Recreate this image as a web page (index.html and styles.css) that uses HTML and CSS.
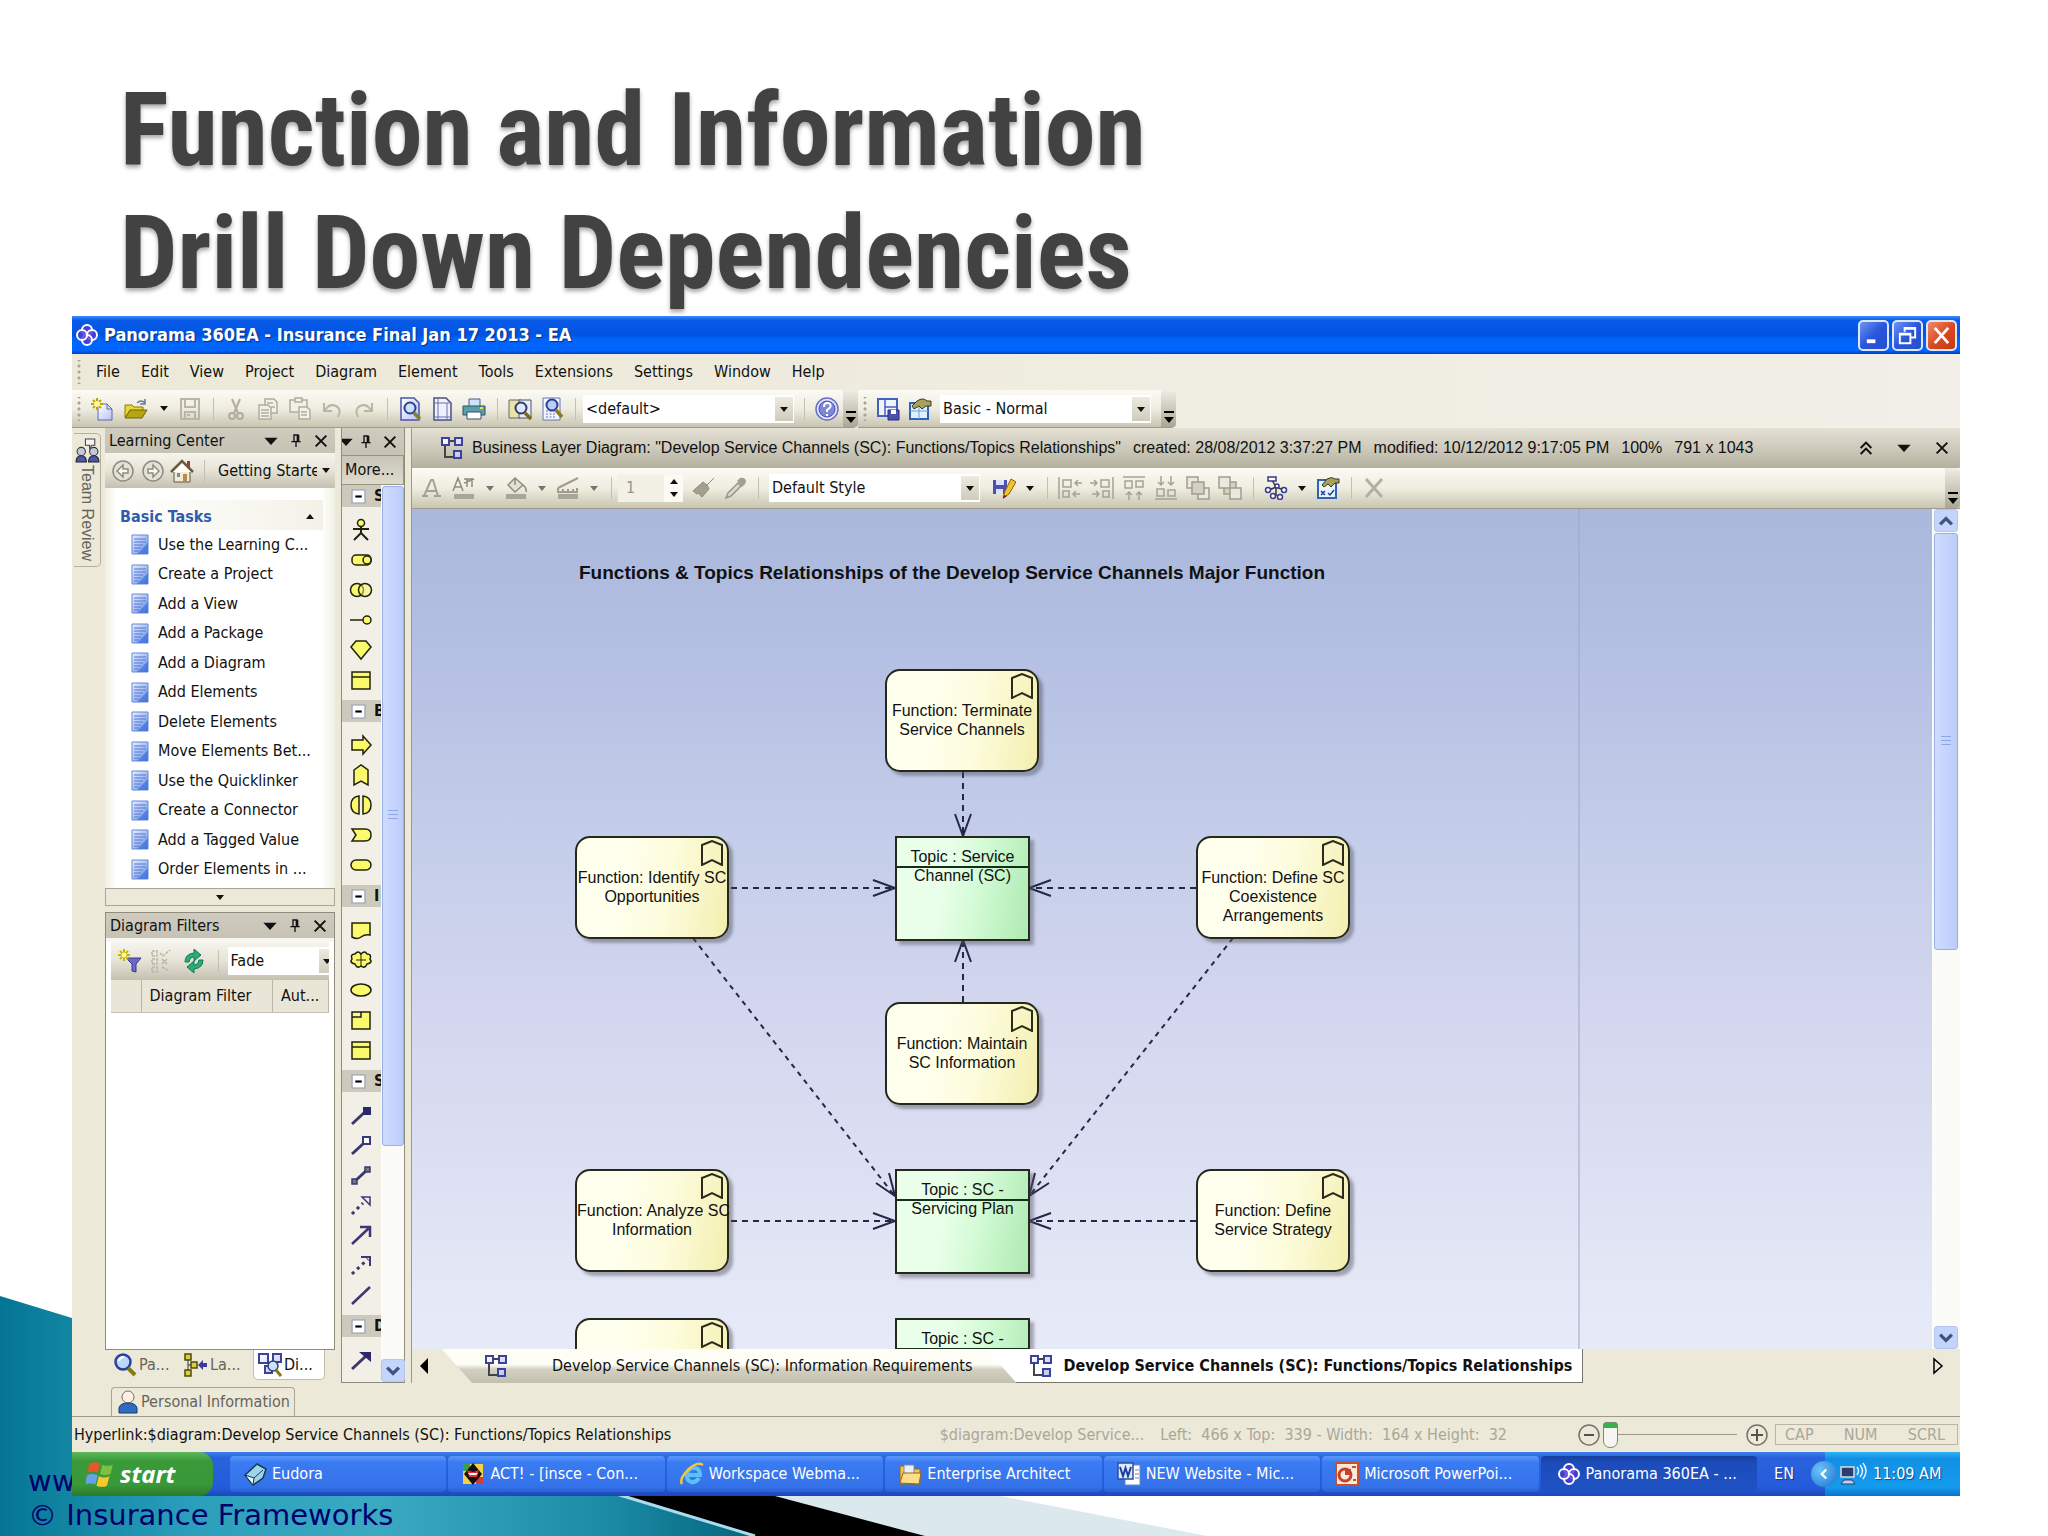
FILE: index.html
```html
<!DOCTYPE html>
<html lang="en">
<head>
<meta charset="utf-8">
<title>Function and Information Drill Down Dependencies</title>
<link rel="stylesheet" href="styles.css">
</head>
<body>
<svg class="defs" width="0" height="0" aria-hidden="true">
  <defs>
    <linearGradient id="paper" x1="0" y1="0" x2="1" y2="1"><stop offset="0" stop-color="#fff"/><stop offset="1" stop-color="#b9c2f4"/></linearGradient>
    <linearGradient id="teal" x1="0" y1="0" x2="1" y2="0"><stop offset="0" stop-color="#047694"/><stop offset=".25" stop-color="#2a9fbb"/><stop offset=".5" stop-color="#3ba9c2"/><stop offset=".8" stop-color="#1c8ca6"/><stop offset="1" stop-color="#04657d"/></linearGradient>
    <linearGradient id="doc" x1="0" y1="0" x2="1" y2="1"><stop offset="0" stop-color="#e8efff"/><stop offset=".5" stop-color="#a9c2f5"/><stop offset="1" stop-color="#4d7de0"/></linearGradient>
  </defs>
  <symbol id="i-logo" viewBox="0 0 24 24"><g fill="#5038d8" fill-opacity=".8" stroke="#fff" stroke-width="2"><circle cx="12" cy="7" r="5"/><circle cx="17" cy="12" r="5"/><circle cx="12" cy="17" r="5"/><circle cx="7" cy="12" r="5"/></g></symbol>
  <symbol id="i-new" viewBox="0 0 24 24"><path d="M8 7h9l5 5v11H8z" fill="url(#paper)" stroke="#5b66b8"/><path d="M17 7v5h5" fill="none" stroke="#5b66b8"/><path d="M7 1v12M1 7h12M3 3l8 8M11 3l-8 8" stroke="#b9a600" stroke-width="2"/><circle cx="7" cy="7" r="3" fill="#fff8a0"/></symbol>
  <symbol id="i-open" viewBox="0 0 24 24"><path d="M1 20V8h7l2 2h9v4" fill="#e8d53a" stroke="#8a7a00"/><path d="M1 21l5-8h17l-5 8z" fill="#b7a411" stroke="#6f6200"/><path d="M13 6q4-4 8 0M21 2v5h-5" fill="none" stroke="#6a78a0" stroke-width="1.5"/></symbol>
  <symbol id="i-save" viewBox="0 0 24 24"><g fill="none" stroke="#b9b6a6" stroke-width="2"><path d="M3 2h18v20H3z"/><path d="M7 2v8h10V2M7 22v-7h10v7M9 18h3"/></g></symbol>
  <symbol id="i-cut" viewBox="0 0 24 24"><g fill="none" stroke="#b0ad9e" stroke-width="2"><path d="M8 2l6 14M16 2l-6 14"/><circle cx="8" cy="19" r="3"/><circle cx="16" cy="19" r="3"/></g></symbol>
  <symbol id="i-copy" viewBox="0 0 24 24"><g fill="#f2f1e8" stroke="#b0ad9e" stroke-width="1.5"><path d="M9 2h9l3 3v11H9z"/><path d="M3 8h9l3 3v11H3z"/><path d="M5 13h8M5 16h8M5 19h8M11 6h6M15 10h4"/></g></symbol>
  <symbol id="i-paste" viewBox="0 0 24 24"><g fill="#f2f1e8" stroke="#b0ad9e" stroke-width="1.5"><path d="M2 3h17v12H2z"/><path d="M7 1h7v4H7z"/><path d="M11 10h8l3 3v9H11zM13 15h6M13 18h6"/></g></symbol>
  <symbol id="i-undo" viewBox="0 0 24 24"><path d="M4 6v8h8M5 13q5-7 11-4t2 11" fill="none" stroke="#b9b6a6" stroke-width="2"/></symbol>
  <symbol id="i-redo" viewBox="0 0 24 24"><path d="M20 6v8h-8M19 13q-5-7-11-4t-2 11" fill="none" stroke="#b9b6a6" stroke-width="2"/></symbol>
  <symbol id="i-preview" viewBox="0 0 24 24"><path d="M3 1h13l5 5v17H3z" fill="url(#paper)" stroke="#4a55a8" stroke-width="1.5"/><circle cx="12" cy="11" r="5.500" fill="#cfe0ff" stroke="#2c3f91" stroke-width="2"/><path d="M16 16l6 6" stroke="#8a7d1a" stroke-width="3.500"/></symbol>
  <symbol id="i-page" viewBox="0 0 24 24"><path d="M4 1h12l5 5v17H4z" fill="#eef1ff" stroke="#4a4f80" stroke-width="1.500"/><path d="M8 1v22M17 6v17M4 6h17M4 20h17" stroke="#6a70a8"/></symbol>
  <symbol id="i-print" viewBox="0 0 24 24"><path d="M7 2h11v8H7z" fill="#cfe3ff" stroke="#4a5a8a"/><path d="M1 9h22v9H1z" fill="#5aa0a8" stroke="#2b5560"/><path d="M5 15h14v7H5z" fill="#fff" stroke="#3a4a6a"/><path d="M18 11h3" stroke="#e8e04a" stroke-width="2"/></symbol>
  <symbol id="i-find" viewBox="0 0 24 24"><path d="M1 3h12v18H1z" fill="#e9e3a5" stroke="#666"/><path d="M11 3h12v18H11z" fill="#e8ecff" stroke="#555"/><circle cx="13" cy="11" r="5.500" fill="#dfe6ff" stroke="#333a66" stroke-width="2"/><path d="M17 16l6 6" stroke="#7a6d1a" stroke-width="3.500"/></symbol>
  <symbol id="i-find2" viewBox="0 0 24 24"><path d="M3 1h17v22H3z" fill="#f2f4ff" stroke="#6672b8"/><path d="M6 14h9M6 17h9M6 20h9" stroke="#6672b8" stroke-dasharray="2 1.500"/><circle cx="12" cy="8" r="5.500" fill="#b9cdfb" stroke="#2c3f91" stroke-width="2"/><path d="M16 13l6 7" stroke="#8a7d1a" stroke-width="3.500"/></symbol>
  <symbol id="i-help" viewBox="0 0 24 24"><circle cx="12" cy="12" r="11" fill="#e4e6ff" stroke="#6a6fc8" stroke-width="1.500"/><circle cx="12" cy="12" r="8" fill="#7f87d8" stroke="#4c50a8"/><path d="M9 10q0-4 3.500-4t3 3.500q-.5 1.500-3.500 3.500v2M12 17v2" fill="none" stroke="#fff" stroke-width="2"/></symbol>
  <symbol id="i-layout" viewBox="0 0 24 24"><path d="M2 2h19v17H2z" fill="#eef3ff" stroke="#4660c0" stroke-width="2"/><path d="M9 2v17M9 10h12" stroke="#4660c0" stroke-width="1.500"/><path d="M12 13h11v10H12z" fill="#4c50b0" stroke="#2a2d78"/><path d="M15 13h5v4h-5z" fill="#fff"/></symbol>
  <symbol id="i-layout2" viewBox="0 0 24 24"><path d="M2 6h18v16H2z" fill="#dff0ff" stroke="#2f62b8" stroke-width="2"/><path d="M2 14h18M11 6v16" stroke="#69a3e0"/><path d="M4 9l5-5q6-4 10 0h4v5h-5l-4 3-3-3-5 3z" fill="#a9a05a" stroke="#3c3a1a"/></symbol>
  <symbol id="i-diagram" viewBox="0 0 24 24"><g fill="url(#paper)" stroke="#3b429c" stroke-width="2"><path d="M5 9v12h9M9 5h6" fill="none" stroke="#444"/><path d="M2 2h7v7H2zM15 2h7v7h-7zM14 15h7v7h-7z"/></g></symbol>
  <symbol id="i-team" viewBox="0 0 24 24"><path d="M10 1h9v6h-3l-2 3v-3h-4z" fill="#f3f3f3" stroke="#444"/><circle cx="6" cy="13" r="4" fill="#c3c8d8" stroke="#333"/><circle cx="18" cy="13" r="4" fill="#c3c8d8" stroke="#333"/><path d="M1 23q0-6 5-6t5 6zM13 23q0-6 5-6t5 6z" fill="#4a5aa8" stroke="#222"/></symbol>
  <symbol id="i-pin" viewBox="0 0 24 24"><path d="M8 3h8M9 3v10M14 3v10M16 3v10M5 13h14M12 13v8" fill="none" stroke="#111" stroke-width="2"/></symbol>
  <symbol id="i-x" viewBox="0 0 24 24"><path d="M4 4l16 16M20 4L4 20" stroke="currentColor" stroke-width="3"/></symbol>
  <symbol id="i-down" viewBox="0 0 24 24"><path d="M2 7h20L12 18z" fill="currentColor"/></symbol>
  <symbol id="i-chev" viewBox="0 0 24 24"><path d="M4 12l8-8 8 8M4 21l8-8 8 8" fill="none" stroke="#111" stroke-width="3"/></symbol>
  <symbol id="i-over" viewBox="0 0 12 24"><path d="M1 9h10" stroke="#000" stroke-width="2"/><path d="M1 14h10l-5 6z"/></symbol>
  <symbol id="i-back" viewBox="0 0 24 24"><circle cx="12" cy="12" r="10" fill="#e4e2d8" stroke="#8f8c7e" stroke-width="1.500"/><path d="M6 12l6-6v4h5v4h-5v4z" fill="#f8f7f0" stroke="#8f8c7e" stroke-width="1.500"/></symbol>
  <symbol id="i-fwd" viewBox="0 0 24 24"><circle cx="12" cy="12" r="10" fill="#e4e2d8" stroke="#8f8c7e" stroke-width="1.500"/><path d="M18 12l-6-6v4H7v4h5v4z" fill="#f8f7f0" stroke="#8f8c7e" stroke-width="1.500"/></symbol>
  <symbol id="i-home" viewBox="0 0 24 24"><path d="M4 12v11h16V12" fill="#f4ead0" stroke="#555"/><path d="M17 2h3v6h-3z" fill="#a33"/><path d="M1 13L12 2l11 11" fill="#fff" stroke="#6d5a36" stroke-width="2.500"/><path d="M13 15h4v8h-4z" fill="#b98a4a"/><path d="M7 14h3v4H7z" fill="#6a8ac8"/></symbol>
  <symbol id="i-doc" viewBox="0 0 18 21"><path d="M1 1h16v19H1z" fill="url(#doc)" stroke="#6487d6"/><path d="M3 5h12M3 8h12M3 11h9M3 14h7M3 17h5" stroke="#5674cc"/><path d="M17 9v11H6z" fill="#3f74dc" opacity=".7"/></symbol>
  <symbol id="i-letter" viewBox="0 0 24 24"><path d="M4 20L11 4h2l5 16M7 15h9M2 20h6M14 20h7" fill="none" stroke="#a5a293" stroke-width="2"/></symbol>
  <symbol id="i-letters" viewBox="0 0 24 24"><path d="M1 15L6 2l5 13M3 11h7M12 3h10M12 7l10-4M15 3v8M20 3v8" fill="none" stroke="#8f8c7e" stroke-width="1.500"/><path d="M2 18h20v5H2z" fill="#a9a698"/></symbol>
  <symbol id="i-fill" viewBox="0 0 24 24"><path d="M4 9l7-7 8 7-8 7zM11 2v7M19 9q4 3 3 7" fill="#e3e1d5" stroke="#8f8c7e" stroke-width="1.500"/><path d="M2 18h20v5H2z" fill="#a9a698"/></symbol>
  <symbol id="i-line" viewBox="0 0 24 24"><path d="M2 12L22 2M2 12v4h19v-4M7 13v3M12 13v3M17 13v3" fill="none" stroke="#a09d8e" stroke-width="2"/><path d="M2 18h20v5H2z" fill="#a9a698"/></symbol>
  <symbol id="i-brush" viewBox="0 0 24 24"><path d="M23 2l-7 7-4-3-10 9q3 1 3 3l3-1q1 3 3 4l7-8-2-4 7-7z" fill="#a3a091" stroke="#8f8c7e"/></symbol>
  <symbol id="i-dropper" viewBox="0 0 24 24"><path d="M3 22l2-5L15 7l3 3L8 20z" fill="#dcdacd" stroke="#99968a" stroke-width="1.500"/><path d="M14 5l3-3q3-1 5 1t0 5l-3 3z" fill="#a3a091"/></symbol>
  <symbol id="i-savepen" viewBox="0 0 24 24"><path d="M1 4h14v14H1z" fill="#4c50b0"/><path d="M4 4h8v5H4zM4 13h7v5H4z" fill="#dfe2ff"/><path d="M11 22l2-7L19 3l5 3-7 12z" fill="#f0c52a" stroke="#8a5a1a"/><path d="M11 23l1-4 3 1z" fill="#7a1f10"/></symbol>
  <symbol id="i-al1" viewBox="0 0 24 24"><path d="M1 1v22M5 4h8v7H5zM5 15h6v6H5zM24 7h-7m3-3l-3 3 3 3M22 18h-7m3-3l-3 3 3 3" fill="none" stroke="#a5a293" stroke-width="1.500"/></symbol>
  <symbol id="i-al2" viewBox="0 0 24 24"><path d="M23 1v22M11 4h8v7h-8zM13 15h6v6h-6zM0 7h7M4 4l3 3-3 3M2 18h7m-3-3l3 3-3 3" fill="none" stroke="#a5a293" stroke-width="1.500"/></symbol>
  <symbol id="i-al3" viewBox="0 0 24 24"><path d="M1 1h22M3 5h7v7H3zM14 5h7v6h-7zM7 24v-8m-3 3l3-3 3 3M17 24v-8m-3 3l3-3 3 3" fill="none" stroke="#a5a293" stroke-width="1.500"/></symbol>
  <symbol id="i-al4" viewBox="0 0 24 24"><path d="M1 23h22M3 13h7v7H3zM14 14h7v6h-7zM7 0v9M4 6l3 3 3-3M17 0v9m-3-3l3 3 3-3" fill="none" stroke="#a5a293" stroke-width="1.500"/></symbol>
  <symbol id="i-zf" viewBox="0 0 24 24"><g fill="#ebe9df" stroke="#a09d8e" stroke-width="1.500"><path d="M1 1h11v11H1zM12 12h11v11H12z"/><path d="M6 6h12v12H6z" fill="#d4d1c2"/></g></symbol>
  <symbol id="i-zb" viewBox="0 0 24 24"><g fill="#ebe9df" stroke="#a09d8e" stroke-width="1.500"><path d="M6 6h12v12H6z" fill="#d4d1c2"/><path d="M1 1h11v11H1zM12 12h11v11H12z"/></g></symbol>
  <symbol id="i-tree" viewBox="0 0 24 24"><g fill="#fff" stroke="#36388a" stroke-width="1.500"><path d="M8 4l4 7M12 11l-7 3M12 11l8 3M12 12v8" fill="none" stroke="#333"/><path d="M4 1h8v4H4z"/><circle cx="13" cy="10" r="2"/><circle cx="4" cy="14" r="2.500"/><circle cx="20" cy="14" r="2.500"/><circle cx="9" cy="20" r="2.500"/><circle cx="16" cy="21" r="2.500"/></g></symbol>
  <symbol id="i-props" viewBox="0 0 24 24"><path d="M2 4h18v18H2z" fill="#eaf4ff" stroke="#2f62b8" stroke-width="2"/><path d="M5 15l4 4M9 15l-4 4M12 17l2 2 4-5" fill="none" stroke="#223a90" stroke-width="1.500"/><path d="M6 9l5-6q5-3 8 0h4v4h-4l-4 4-3-3-4 3z" fill="#a9a05a" stroke="#3c3a1a"/></symbol>
  <symbol id="i-gx" viewBox="0 0 24 24"><path d="M4 3l16 18M20 3L4 21" stroke="#b3b0a3" stroke-width="3"/></symbol>
  <symbol id="i-funnel" viewBox="0 0 24 24"><path d="M8 9h15l-5 6v8l-4-1v-7z" fill="#6c66c8" stroke="#3c3890"/><g stroke="#c9b400" stroke-width="2"><path d="M6 0v12M0 6h12M2 2l8 8M10 2l-8 8"/></g><circle cx="6" cy="6" r="2.500" fill="#fff8a0"/></symbol>
  <symbol id="i-checks" viewBox="0 0 24 24"><path d="M2 2h5v5H2zM2 10h5v5H2zM2 18h5v5H2zM10 4l3 3 7-6M12 10l5 5M17 10l-5 5M12 18l7 4" fill="none" stroke="#b9b6a6" stroke-width="1.500" stroke-dasharray="3 1"/></symbol>
  <symbol id="i-refresh" viewBox="0 0 24 24"><path d="M3 13Q3 5 12 4V0l7 6-7 6V8q-4 0-5 5zM21 11q0 8-9 9v4l-7-6 7-6v4q4 0 5-5z" fill="#2fa87a" stroke="#0d7a50"/></symbol>
  <symbol id="i-mag" viewBox="0 0 24 24"><circle cx="10" cy="9" r="7.500" fill="#b9d8ff" stroke="#2b3f9a" stroke-width="2.500"/><path d="M6 8q1-4 5-4" stroke="#fff" stroke-width="2" fill="none"/><path d="M15 15l7 7" stroke="#847a18" stroke-width="4"/></symbol>
  <symbol id="i-layers" viewBox="0 0 24 24"><path d="M4 4v16M4 12h7" stroke="#333" fill="none"/><g fill="#d8d23a" stroke="#4c4a10" stroke-width="1.500"><path d="M1 1h6v6H1zM1 17h6v6H1zM7 9h6v6H7z"/></g><path d="M14 12l5-5v3h4v4h-4v3z" fill="#3c3aa0"/></symbol>
  <symbol id="i-dfind" viewBox="0 0 24 24"><g fill="url(#paper)" stroke="#3b429c" stroke-width="2"><path d="M1 1h9v9H1zM15 1h8v8h-8zM7 13h7v7H7z"/></g><circle cx="15" cy="13" r="5" fill="#cfe0ff" stroke="#2c3f6a" stroke-width="1.500"/><path d="M18 17l5 6" stroke="#847a18" stroke-width="3"/></symbol>
  <symbol id="i-person" viewBox="0 0 24 24"><circle cx="12" cy="7" r="6" fill="#fdf1e6" stroke="#7a6a60"/><path d="M3 23V18q1-5 9-5t9 5v5z" fill="#2f6cc0" stroke="#143a70"/></symbol>
  <symbol id="i-minus" viewBox="0 0 14 14"><path d="M1 1h12v12H1z" fill="#fff" stroke="#8f9bb0"/><path d="M4 7h6" stroke="#000" stroke-width="2"/></symbol>
  <symbol id="t-actor" viewBox="0 0 24 24"><circle cx="12" cy="5" r="3.500"/><path d="M12 9v6M4 11h16M12 15l-7 7M12 15l7 7" stroke-width="2" fill="none"/></symbol>
  <symbol id="t-role" viewBox="0 0 24 24"><rect x="3" y="7" width="19" height="10" rx="4"/><circle cx="18" cy="12" r="4"/></symbol>
  <symbol id="t-collab" viewBox="0 0 24 24"><circle cx="8" cy="12" r="6.500"/><circle cx="16" cy="12" r="6.500" fill-opacity=".5"/></symbol>
  <symbol id="t-iface" viewBox="0 0 24 24"><path d="M1 12h13"/><circle cx="18" cy="12" r="4"/></symbol>
  <symbol id="t-gem" viewBox="0 0 24 24"><path d="M7 3h10l5 6-10 12L2 9z"/></symbol>
  <symbol id="t-obj" viewBox="0 0 24 24"><path d="M3 4h18v17H3zM3 9h18"/></symbol>
  <symbol id="t-proc" viewBox="0 0 24 24"><path d="M3 7h11V3l8 9-8 9v-4H3z"/></symbol>
  <symbol id="t-func" viewBox="0 0 24 24"><path d="M5 7l7-5 7 5v15l-7-4-7 4z"/></symbol>
  <symbol id="t-inter" viewBox="0 0 24 24"><path d="M10 3v18Q2 20 2 12t8-9zM14 3v18q8-1 8-9t-8-9z"/></symbol>
  <symbol id="t-event" viewBox="0 0 24 24"><path d="M3 6h13q6 0 6 6t-6 6H3l4-6z"/></symbol>
  <symbol id="t-serv" viewBox="0 0 24 24"><rect x="2" y="7" width="20" height="10" rx="5"/></symbol>
  <symbol id="t-repr" viewBox="0 0 24 24"><path d="M3 5h18v12q-5-1-9 2t-9 0z"/></symbol>
  <symbol id="t-mean" viewBox="0 0 24 24"><path d="M6 6q3-4 6 0 4-4 6 0 5 0 3 5 3 4-3 5-2 5-6 2-4 3-6-2-6-1-3-5-2-5 3-5z"/><path d="M12 6v12M7 12h10" stroke-width="1"/></symbol>
  <symbol id="t-value" viewBox="0 0 24 24"><ellipse cx="12" cy="12" rx="10" ry="6"/></symbol>
  <symbol id="t-prod" viewBox="0 0 24 24"><path d="M3 4h18v17H3zM3 9h9V4"/></symbol>
  <symbol id="r-comp" viewBox="0 0 24 24"><path d="M3 21L17 8" stroke="#3a3868" stroke-width="3"/><path d="M14 4h8v8h-8z" fill="#2a2868"/></symbol>
  <symbol id="r-aggr" viewBox="0 0 24 24"><path d="M3 21L15 10" stroke="#3a3868" stroke-width="3"/><path d="M14 4h7v7h-7z" fill="#fff" stroke="#3a3878" stroke-width="2"/></symbol>
  <symbol id="r-assign" viewBox="0 0 24 24"><path d="M5 19L18 7" stroke="#3a3868" stroke-width="3"/><path d="M3 16h5v5H3zM16 4h5v5h-5z" fill="#777" stroke="#3a3878" stroke-width="1.500"/></symbol>
  <symbol id="r-real" viewBox="0 0 24 24"><path d="M3 21L14 10" stroke="#3a3868" stroke-width="3" stroke-dasharray="3 4"/><path d="M13 4h8v8z" fill="#eee" stroke="#3a3878" stroke-width="1.500"/></symbol>
  <symbol id="r-used" viewBox="0 0 24 24"><path d="M3 21L20 5M11 4h10v10" fill="none" stroke="#3a3878" stroke-width="2.500"/></symbol>
  <symbol id="r-acc" viewBox="0 0 24 24"><path d="M3 21L19 6" stroke="#3a3868" stroke-width="3" stroke-dasharray="3 4"/><path d="M12 4h9v9" fill="none" stroke="#3a3878" stroke-width="2"/></symbol>
  <symbol id="r-assoc" viewBox="0 0 24 24"><path d="M3 21L21 4" stroke="#3a3878" stroke-width="2.500"/></symbol>
  <symbol id="r-trig" viewBox="0 0 24 24"><path d="M3 21L17 8" stroke="#3a3868" stroke-width="3"/><path d="M10 4h12v10z" fill="#2a2868"/></symbol>
  <symbol id="badge" viewBox="0 0 22 26"><path d="M1 5l10-4 10 4v20l-10-5-10 5z" fill="none" stroke="#2b2b1c" stroke-width="2"/></symbol>
  <symbol id="i-win" viewBox="0 0 24 24"><path d="M3 3q5-2 9 0l-2 8q-4-2-9 0z" fill="#e8562a"/><path d="M14 4q4 2 9 0l-2 8q-5 2-9 0z" fill="#7cc142"/><path d="M1 13q4-2 9 0l-2 8q-4-2-9 0z" fill="#6aa0f0"/><path d="M11 14q5 2 9 0l-2 8q-4 2-9 0z" fill="#f6c92c"/></symbol>
  <symbol id="i-eudora" viewBox="0 0 24 24"><path d="M2 13L14 2l9 5-3 9-10 7z" fill="#9fd3ea" stroke="#123a56" stroke-width="1.500"/><path d="M2 13l9 3-1 7zM11 16l9-8" fill="#e6f6fc" stroke="#123a56"/></symbol>
  <symbol id="i-act" viewBox="0 0 24 24"><path d="M2 2h20v20H2z" fill="#f2d24a"/><path d="M2 2h7v7H2z" fill="#3aa04a"/><path d="M15 15h7v7h-7z" fill="#d83a3a"/><path d="M12 1l9 11-9 11-9-11z" fill="#111"/><path d="M6 8l6 2 6-2-2 7H8z" fill="#e03030"/><path d="M7 11h10l-2 2H9z" fill="#fff"/></symbol>
  <symbol id="i-ie" viewBox="0 0 24 24"><path d="M19 16q-3 5-8 4-5-2-4-8t7-6 6 7H8" fill="none" stroke="#5ec1f5" stroke-width="4"/><path d="M2 22Q-1 17 8 8T23 3" fill="none" stroke="#f0c83a" stroke-width="2.500"/></symbol>
  <symbol id="i-folder" viewBox="0 0 24 24"><path d="M2 4h8l2 3h10v15H2z" fill="#f3c552" stroke="#94651a"/><path d="M6 3h10v13H6z" fill="#e8f0ff" stroke="#889"/><path d="M2 21l3-10h18l-2 11z" fill="#fbdf86" stroke="#94651a"/></symbol>
  <symbol id="i-word" viewBox="0 0 24 24"><path d="M8 3h15v20H8z" fill="#fff" stroke="#6a86c0"/><path d="M18 8h4M18 12h4M18 16h4" stroke="#6a86c0"/><path d="M1 1h15v16H1z" fill="#dfe8fb" stroke="#2a4fa0" stroke-width="1.500"/><path d="M3 5l3 9 2.500-8L11 14l3-9" fill="none" stroke="#1b3f98" stroke-width="2"/></symbol>
  <symbol id="i-ppt" viewBox="0 0 24 24"><path d="M1 1h22v22H1z" fill="#fbe9dc" stroke="#c7502a" stroke-width="2"/><circle cx="10" cy="13" r="6" fill="none" stroke="#c7402a" stroke-width="3"/><path d="M10 13V7h6v6z" fill="#c7402a"/><path d="M17 5h4M18 18h3" stroke="#c7502a" stroke-width="2"/></symbol>
  <symbol id="i-net" viewBox="0 0 28 24"><path d="M2 5h13v10H2z" fill="#2b3f6a" stroke="#d5dcec" stroke-width="1.500"/><path d="M5 18h8l3 4H2z" fill="#c5cfe8" stroke="#2b3f6a"/><path d="M18 5q3 4 0 8M21 3q5 6 0 12M24 1q6 8 0 16" fill="none" stroke="#e4efff" stroke-width="1.500"/></symbol>
</svg>

<header class="slide-title">
  <h1>Function and Information<br>Drill Down Dependencies</h1>
</header>

<svg class="swoosh" viewBox="0 0 1240 240" aria-hidden="true">
  <path d="M560 180L1207 240H920z" fill="#dbe8ee"/>
  <path d="M600 130L1000 200l207 40H560z" fill="#dbe8ee"/>
  <path d="M560 140L775 200l150 40H560z" fill="#000"/>
  <path d="M0 0L72 22 623 200l132 40H0z" fill="url(#teal)"/>
  <path d="M560 180L623 200l132 40" fill="none" stroke="#a9dcec" stroke-width="3"/>
</svg>
<footer class="slide-foot">www<br>© Insurance Frameworks</footer>

<main class="window">
  <div class="titlebar">
    <svg class="ic"><use href="#i-logo"/></svg>
    <h2>Panorama 360EA - Insurance Final Jan 17 2013 - EA</h2>
    <button class="wb" aria-label="Minimize"><svg viewBox="0 0 24 24"><path d="M5 16h9v4H5z" fill="#fff"/></svg></button>
    <button class="wb" aria-label="Restore"><svg viewBox="0 0 24 24"><path d="M9 8V4h11v10h-4M9 5h11M4 10h11v10H4zM4 11h11" fill="none" stroke="#fff" stroke-width="2"/></svg></button>
    <button class="wb close" aria-label="Close"><svg viewBox="0 0 24 24"><path d="M5 4l14 16M19 4L5 20" stroke="#fff" stroke-width="3"/></svg></button>
  </div>

  <nav class="menubar">
    <span class="grip"></span>
    <button>File</button><button>Edit</button><button>View</button><button>Project</button><button>Diagram</button><button>Element</button><button>Tools</button><button>Extensions</button><button>Settings</button><button>Window</button><button>Help</button>
  </nav>

  <div class="toolrow">
    <div class="toolbar">
      <span class="grip"></span>
      <button class="tool" aria-label="New"><svg><use href="#i-new"/></svg></button>
      <button class="tool wide" aria-label="Open"><svg><use href="#i-open"/></svg></button>
      <button class="caret" aria-label="Open recent"></button>
      <button class="tool" aria-label="Save"><svg><use href="#i-save"/></svg></button>
      <span class="sep"></span>
      <button class="tool" aria-label="Cut"><svg><use href="#i-cut"/></svg></button>
      <button class="tool" aria-label="Copy"><svg><use href="#i-copy"/></svg></button>
      <button class="tool" aria-label="Paste"><svg><use href="#i-paste"/></svg></button>
      <button class="tool" aria-label="Undo"><svg><use href="#i-undo"/></svg></button>
      <button class="tool" aria-label="Redo"><svg><use href="#i-redo"/></svg></button>
      <span class="sep"></span>
      <button class="tool" aria-label="Print preview"><svg><use href="#i-preview"/></svg></button>
      <button class="tool" aria-label="Page setup"><svg><use href="#i-page"/></svg></button>
      <button class="tool" aria-label="Print"><svg><use href="#i-print"/></svg></button>
      <span class="sep"></span>
      <button class="tool" aria-label="Search model"><svg><use href="#i-find"/></svg></button>
      <button class="tool" aria-label="Search diagram"><svg><use href="#i-find2"/></svg></button>
      <span class="sep"></span>
      <span class="combo first"><select aria-label="View"><option>&lt;default&gt;</option></select></span>
      <span class="sep"></span>
      <button class="tool" aria-label="Help"><svg><use href="#i-help"/></svg></button>
      <button class="over" aria-label="More buttons"><svg><use href="#i-over"/></svg></button>
    </div>
    <div class="toolbar">
      <span class="grip"></span>
      <button class="tool" aria-label="Save layout"><svg><use href="#i-layout"/></svg></button>
      <button class="tool" aria-label="Edit layout"><svg><use href="#i-layout2"/></svg></button>
      <span class="combo"><select aria-label="Workspace"><option>Basic - Normal</option></select></span>
      <button class="over last" aria-label="More buttons"><svg><use href="#i-over"/></svg></button>
    </div>
  </div>

  <div class="work">
    <div class="rail">
      <button class="railtab"><svg><use href="#i-team"/></svg><span>Team Review</span></button>
    </div>

    <aside class="side">
      <section class="panel learn">
        <div class="phead"><h3>Learning Center</h3><button aria-label="Menu"><svg><use href="#i-down"/></svg></button><button aria-label="Pin"><svg><use href="#i-pin"/></svg></button><button aria-label="Close"><svg><use href="#i-x"/></svg></button></div>
        <div class="pbar">
          <button class="tool" aria-label="Back"><svg><use href="#i-back"/></svg></button><button class="tool" aria-label="Forward"><svg><use href="#i-fwd"/></svg></button><button class="tool" aria-label="Home"><svg><use href="#i-home"/></svg></button>
          <span class="sep"></span>
          <button class="topic"><span>Getting Started</span><i class="tri"></i></button>
        </div>
        <div class="tasks">
          <h4>Basic Tasks <i class="tri up"></i></h4>
          <ul>
            <li><a href="#"><svg><use href="#i-doc"/></svg>Use the Learning C...</a></li>
            <li><a href="#"><svg><use href="#i-doc"/></svg>Create a Project</a></li>
            <li><a href="#"><svg><use href="#i-doc"/></svg>Add a View</a></li>
            <li><a href="#"><svg><use href="#i-doc"/></svg>Add a Package</a></li>
            <li><a href="#"><svg><use href="#i-doc"/></svg>Add a Diagram</a></li>
            <li><a href="#"><svg><use href="#i-doc"/></svg>Add Elements</a></li>
            <li><a href="#"><svg><use href="#i-doc"/></svg>Delete Elements</a></li>
            <li><a href="#"><svg><use href="#i-doc"/></svg>Move Elements Bet...</a></li>
            <li><a href="#"><svg><use href="#i-doc"/></svg>Use the Quicklinker</a></li>
            <li><a href="#"><svg><use href="#i-doc"/></svg>Create a Connector</a></li>
            <li><a href="#"><svg><use href="#i-doc"/></svg>Add a Tagged Value</a></li>
            <li><a href="#"><svg><use href="#i-doc"/></svg>Order Elements in ...</a></li>
          </ul>
        </div>
        <button class="more" aria-label="Scroll down"><i class="tri"></i></button>
      </section>
      <section class="panel filters">
        <div class="phead"><h3>Diagram Filters</h3><button aria-label="Menu"><svg><use href="#i-down"/></svg></button><button aria-label="Pin"><svg><use href="#i-pin"/></svg></button><button aria-label="Close"><svg><use href="#i-x"/></svg></button></div>
        <div class="fbody">
          <div class="pbar">
            <button class="tool" aria-label="New filter"><svg><use href="#i-funnel"/></svg></button><button class="tool" aria-label="Edit filter"><svg><use href="#i-checks"/></svg></button><button class="tool" aria-label="Refresh"><svg><use href="#i-refresh"/></svg></button>
            <span class="sep"></span>
            <span class="combo slim"><select aria-label="Effect"><option>Fade</option></select></span>
          </div>
          <table><thead><tr><th class="c0"></th><th>Diagram Filter</th><th class="c2">Aut...</th></tr></thead></table>
        </div>
      </section>
      <div class="ptabs">
        <button><svg><use href="#i-mag"/></svg>Pa...</button><button class="mid"><svg><use href="#i-layers"/></svg>La...</button><button class="on"><svg><use href="#i-dfind"/></svg>Di...</button>
      </div>
    </aside>

    <aside class="toolbox">
      <div class="phead"><button class="cut" aria-label="Menu"><svg><use href="#i-down"/></svg></button><button aria-label="Pin"><svg><use href="#i-pin"/></svg></button><button aria-label="Close"><svg><use href="#i-x"/></svg></button></div>
      <button class="morebtn">More...</button>
      <div class="tbody">
        <div class="tlist">
          <h5><svg><use href="#i-minus"/></svg>S</h5>
          <div class="tgroup yel"><svg><use href="#t-actor"/></svg><svg><use href="#t-role"/></svg><svg><use href="#t-collab"/></svg><svg><use href="#t-iface"/></svg><svg><use href="#t-gem"/></svg><svg><use href="#t-obj"/></svg></div>
          <h5><svg><use href="#i-minus"/></svg>B</h5>
          <div class="tgroup yel"><svg><use href="#t-proc"/></svg><svg><use href="#t-func"/></svg><svg><use href="#t-inter"/></svg><svg><use href="#t-event"/></svg><svg><use href="#t-serv"/></svg></div>
          <h5><svg><use href="#i-minus"/></svg>I</h5>
          <div class="tgroup yel"><svg><use href="#t-repr"/></svg><svg><use href="#t-mean"/></svg><svg><use href="#t-value"/></svg><svg><use href="#t-prod"/></svg><svg><use href="#t-obj"/></svg></div>
          <h5><svg><use href="#i-minus"/></svg>S</h5>
          <div class="tgroup"><svg><use href="#r-comp"/></svg><svg><use href="#r-aggr"/></svg><svg><use href="#r-assign"/></svg><svg><use href="#r-real"/></svg><svg><use href="#r-used"/></svg><svg><use href="#r-acc"/></svg><svg><use href="#r-assoc"/></svg></div>
          <h5><svg><use href="#i-minus"/></svg>D</h5>
          <div class="tgroup"><svg><use href="#r-trig"/></svg></div>
        </div>
        <div class="vscroll box"><span class="thumb"></span><button class="sbtn" aria-label="Scroll down"><svg viewBox="0 0 24 24"><path d="M5 8l7 7 7-7" fill="none" stroke="#3d5585" stroke-width="4"/></svg></button></div>
      </div>
    </aside>

    <section class="doc">
      <div class="dhead">
        <svg class="ic"><use href="#i-diagram"/></svg>
        <p>Business Layer Diagram: "Develop Service Channels (SC): Functions/Topics Relationships"</p>
        <p>created: 28/08/2012 3:37:27 PM</p><p>modified: 10/12/2012 9:17:05 PM</p><p>100%</p><p>791 x 1043</p>
        <span class="dbtns"><button aria-label="Collapse"><svg><use href="#i-chev"/></svg></button><button aria-label="List"><svg><use href="#i-down"/></svg></button><button aria-label="Close"><svg><use href="#i-x"/></svg></button></span>
      </div>
      <div class="dtools">
        <button class="tool" aria-label="Font"><svg><use href="#i-letter"/></svg></button>
        <button class="tool" aria-label="Font color"><svg><use href="#i-letters"/></svg></button><button class="caret dim" aria-label="Font colors"></button>
        <button class="tool" aria-label="Fill"><svg><use href="#i-fill"/></svg></button><button class="caret dim" aria-label="Fill colors"></button>
        <button class="tool" aria-label="Line"><svg><use href="#i-line"/></svg></button><button class="caret dim" aria-label="Line colors"></button>
        <span class="sep"></span>
        <span class="spin"><input type="text" value="1" aria-label="Line width"><span><i class="tri up"></i><i class="tri"></i></span></span>
        <button class="tool" aria-label="Apply style"><svg><use href="#i-brush"/></svg></button>
        <button class="tool" aria-label="Pick style"><svg><use href="#i-dropper"/></svg></button>
        <span class="sep"></span>
        <span class="combo"><select aria-label="Style"><option>Default Style</option></select></span>
        <button class="tool after" aria-label="Save style"><svg><use href="#i-savepen"/></svg></button><button class="caret" aria-label="Save style options"></button>
        <span class="sep"></span>
        <button class="tool" aria-label="Align left"><svg><use href="#i-al1"/></svg></button>
        <button class="tool" aria-label="Align right"><svg><use href="#i-al2"/></svg></button>
        <button class="tool" aria-label="Align top"><svg><use href="#i-al3"/></svg></button>
        <button class="tool" aria-label="Align bottom"><svg><use href="#i-al4"/></svg></button>
        <button class="tool" aria-label="Bring forward"><svg><use href="#i-zf"/></svg></button>
        <button class="tool" aria-label="Send back"><svg><use href="#i-zb"/></svg></button>
        <span class="sep"></span>
        <button class="tool" aria-label="Layout"><svg><use href="#i-tree"/></svg></button><button class="caret" aria-label="Layout options"></button>
        <button class="tool" aria-label="Properties"><svg><use href="#i-props"/></svg></button>
        <span class="sep"></span>
        <button class="tool" aria-label="Delete"><svg><use href="#i-gx"/></svg></button>
        <button class="over end" aria-label="More buttons"><svg><use href="#i-over"/></svg></button>
      </div>
      <div class="stage">
        <div class="canvas">
          <h3 class="ctitle">Functions &amp; Topics Relationships of the Develop Service Channels Major Function</h3>
          <svg class="links" width="1200" height="840" fill="none" stroke="#23284a" stroke-width="2" aria-hidden="true">
            <g stroke-dasharray="6 5">
              <path d="M551 263V326M551 493V432M319 379H482M784 379H618M319 712H482M784 712H618"/>
            </g>
            <g stroke-dasharray="5 5"><path d="M281 429L482 686M821 429L618 686"/></g>
            <path d="M543 305l8 22 8-22M543 453l8-22 8 22M461 371l22 8-22 8M639 371l-22 8 22 8M461 704l22 8-22 8M639 704l-22 8 22 8M464 674l19 13-6-23M637 674l-20 13 6-23"/>
            <path d="M1167 0V840" stroke="#9aa8cc" stroke-width="1"/>
          </svg>
          <div class="node fn" style="left:473px;top:160px">Function: Terminate<br>Service Channels<svg><use href="#badge"/></svg></div>
          <div class="node fn" style="left:163px;top:327px">Function: Identify SC<br>Opportunities<svg><use href="#badge"/></svg></div>
          <div class="node tp" style="left:483px;top:327px">Topic : Service<br>Channel (SC)</div>
          <div class="node fn" style="left:784px;top:327px">Function: Define SC<br>Coexistence<br>Arrangements<svg><use href="#badge"/></svg></div>
          <div class="node fn" style="left:473px;top:493px">Function: Maintain<br>SC Information<svg><use href="#badge"/></svg></div>
          <div class="node fn" style="left:163px;top:660px">Function: Analyze SC<br>Information<svg><use href="#badge"/></svg></div>
          <div class="node tp" style="left:483px;top:660px">Topic : SC -<br>Servicing Plan</div>
          <div class="node fn" style="left:784px;top:660px">Function: Define<br>Service Strategy<svg><use href="#badge"/></svg></div>
          <div class="node fn" style="left:163px;top:809px"><svg><use href="#badge"/></svg></div>
          <div class="node tp" style="left:483px;top:809px">Topic : SC -</div>
        </div>
        <div class="vscroll"><button class="sbtn" aria-label="Scroll up"><svg viewBox="0 0 24 24"><path d="M5 16l7-7 7 7" fill="none" stroke="#3d5585" stroke-width="4"/></svg></button><span class="thumb"></span><button class="sbtn bottom" aria-label="Scroll down"><svg viewBox="0 0 24 24"><path d="M5 8l7 7 7-7" fill="none" stroke="#3d5585" stroke-width="4"/></svg></button></div>
      </div>
      <div class="dtabs">
        <button class="nav" aria-label="Scroll tabs left"><svg viewBox="0 0 12 24"><path d="M10 4v16L2 12z" fill="#000"/></svg></button>
        <button class="dtab"><svg class="ic"><use href="#i-diagram"/></svg><span>Develop Service Channels (SC): Information Requirements</span></button>
        <button class="dtab on"><svg class="ic"><use href="#i-diagram"/></svg><span>Develop Service Channels (SC): Functions/Topics Relationships</span></button>
        <button class="nav right" aria-label="Scroll tabs right"><svg viewBox="0 0 12 24"><path d="M2 5v14l8-7z" fill="none" stroke="#000" stroke-width="1.500"/></svg></button>
      </div>
    </section>
  </div>

  <div class="dock"><button><svg><use href="#i-person"/></svg>Personal Information</button></div>

  <div class="status">
    <span class="msg">Hyperlink:$diagram:Develop Service Channels (SC): Functions/Topics Relationships</span>
    <span class="sel"><span>$diagram:Develop Service...</span><span>Left:&nbsp; 466 x Top:&nbsp; 339 - Width:&nbsp; 164 x Height:&nbsp; 32</span></span>
    <span class="zoom">
      <button aria-label="Zoom out"><svg viewBox="0 0 24 24"><circle cx="12" cy="12" r="10" fill="none" stroke="#77746a" stroke-width="1.500"/><path d="M7 12h10" stroke="#55524a" stroke-width="2"/></svg></button>
      <input type="range" min="0" max="100" value="0" aria-label="Zoom">
      <button aria-label="Zoom in"><svg viewBox="0 0 24 24"><circle cx="12" cy="12" r="10" fill="none" stroke="#77746a" stroke-width="1.500"/><path d="M6 12h12M12 6v12" stroke="#55524a" stroke-width="2"/></svg></button>
    </span>
    <span class="locks"><span>CAP</span><span>NUM</span><span>SCRL</span></span>
  </div>

  <div class="taskbar">
    <button class="start"><svg><use href="#i-win"/></svg>start</button>
    <div class="apps">
      <button><svg><use href="#i-eudora"/></svg>Eudora</button>
      <button><svg><use href="#i-act"/></svg>ACT! - [insce - Con...</button>
      <button><svg><use href="#i-ie"/></svg>Workspace Webma...</button>
      <button><svg><use href="#i-folder"/></svg>Enterprise Architect</button>
      <button><svg><use href="#i-word"/></svg>NEW Website - Mic...</button>
      <button><svg><use href="#i-ppt"/></svg>Microsoft PowerPoi...</button>
      <button class="on"><svg><use href="#i-logo"/></svg>Panorama 360EA - ...</button>
    </div>
    <span class="lang">EN</span>
    <div class="tray"><button class="expand" aria-label="Show hidden icons"><svg viewBox="0 0 24 24"><path d="M15 6l-6 6 6 6" fill="none" stroke="#fff" stroke-width="3"/></svg></button><svg class="net"><use href="#i-net"/></svg><span>11:09 AM</span></div>
  </div>
</main>
</body>
</html>
```
FILE: styles.css
```css
:root {
  --ui: "DejaVu Sans Condensed", "DejaVu Sans", "Noto Sans", sans-serif;
  --face: #ece9d8;
  --line: #9d9a8b;
}
* { box-sizing: border-box; }
body {
  margin: 0;
  min-height: 100vh;
  position: relative;
  display: flex;
  flex-direction: column;
  background: #fff;
  font-family: var(--ui);
  font-size: 16px;
  line-height: 20px;
  color: #111;
  overflow-x: hidden;
}
button, input, select { font: inherit; color: inherit; }
button { border: 0; background: none; padding: 0; display: flex; align-items: center; white-space: nowrap; }
h1, h2, h3, h4, h5, p, ul { margin: 0; padding: 0; font: inherit; }
svg { flex: none; display: block; }
.defs { position: absolute; }

.slide-title { padding: 69px 120px 0; height: 316px; }
.slide-title h1 {
  font-family: "Roboto Condensed", "Roboto", "Liberation Sans", sans-serif;
  font-weight: 700;
  font-size: 102px;
  line-height: 123px;
  color: #424242;
  text-shadow: 0 3px 4px rgba(0, 0, 0, .35);
}
.swoosh { position: absolute; left: 0; bottom: 0; width: 1240px; height: 240px; }
.slide-foot {
  position: absolute; left: 28px; bottom: 4px;
  font: 29px/34px "DejaVu Sans", sans-serif;
  color: #00006c;
}

.window {
  position: relative;
  flex: 1;
  margin: 0 88px 40px 72px;
  display: flex;
  flex-direction: column;
  background: var(--face);
}
.titlebar {
  display: flex; align-items: center; gap: 3px;
  height: 38px; padding: 0 3px;
  background: linear-gradient(#3c8cff, #0a5ae8 12%, #0053e1 50%, #0062fb 60%, #0066ff 90%, #003fc4);
}
.ic { width: 24px; height: 24px; }
.titlebar h2 { flex: 1; padding-left: 2px; font-weight: 700; font-size: 18px; color: #fff; text-shadow: 1px 1px 1px #0a2f80; }
.wb { width: 31px; height: 31px; justify-content: center; border: 2px solid #dbe6ff; border-radius: 5px; background: linear-gradient(135deg, #6d95f5, #2a55dc 50%, #2450cf); }
.wb svg { width: 23px; height: 23px; }
.wb.close { background: linear-gradient(135deg, #f08a68, #d9481f 55%, #c23a12); }

.menubar { display: flex; align-items: center; height: 36px; background: linear-gradient(90deg, #ece9d8, #f2efe8); gap: 21px; }
.grip { width: 14px; height: 24px; background: radial-gradient(circle, #a8a595 1px, transparent 2px) center / 6px 6px repeat-y; }
.menubar .grip { margin-right: -11px; }

.toolrow { display: flex; height: 38px; background: linear-gradient(90deg, #ece9d8, #f2efe8); }
.toolbar, .dtools { display: flex; align-items: center; background: linear-gradient(#fbfaf4, #efede0 50%, #c9c5b2); border-bottom: 1px solid var(--line); }
.toolbar { border-radius: 0 5px 5px 0; }
.tool { width: 32px; height: 32px; justify-content: center; }
.tool.wide { width: 36px; }
.tool svg { width: 24px; height: 24px; }
.sep { width: 14px; height: 22px; background: linear-gradient(#c4c1b1, #c4c1b1) center / 1px 100% no-repeat; flex: none; }
.caret { width: 20px; height: 24px; justify-content: center; }
.caret::after, .tri, .combo::after { content: ""; display: block; width: 0; height: 0; border: 4px solid transparent; border-top: 5px solid #111; border-bottom: 0; }
.caret.dim::after { border-top-color: #77746a; }
.tri.up { border-top: 0; border-bottom: 5px solid #111; }
.combo { position: relative; flex: none; width: 211px; height: 28px; margin: 0 4px; }
.combo.first { margin: 0 3px 0 1px; }
.combo select { appearance: none; width: 100%; height: 100%; border: 0; padding: 0 3px; background: linear-gradient(#eceadf, #cfccbc) right 1px center / 18px 24px no-repeat #fff; }
.combo::after { position: absolute; right: 6px; top: 12px; pointer-events: none; }
.over { width: 15px; align-self: stretch; justify-content: center; align-items: flex-end; background: linear-gradient(#efede4, #aaa793); border-radius: 0 4px 4px 0; }
.over svg { width: 12px; height: 24px; }
.over.last { margin-left: 6px; }

.work { flex: 1; display: flex; min-height: 0; }
.rail { width: 33px; padding: 5px 0 0 2px; }
.railtab { flex-direction: column; gap: 2px; width: 27px; height: 134px; border: 1px solid #b3b0a0; border-left: 0; border-radius: 0 5px 5px 0; padding-top: 4px; font: 16px/20px "Liberation Sans", sans-serif; color: #66645a; }
.railtab svg { width: 25px; height: 25px; }
.railtab span { writing-mode: vertical-rl; }

.side { width: 230px; display: flex; flex-direction: column; }
.panel { display: flex; flex-direction: column; }
.phead { display: flex; align-items: center; height: 25px; padding: 0 2px 0 4px; background: linear-gradient(#cfccbf, #c6c3b5); }
.phead h3 { flex: 1; }
.phead button { width: 25px; justify-content: center; }
.phead svg { width: 16px; height: 16px; }
.pbar { display: flex; align-items: center; height: 35px; padding-left: 3px; background: linear-gradient(#f6f5ee, #e6e3d6 50%, #c4c1b0); }
.pbar .tool { width: 30px; }
.topic { flex: 1; gap: 5px; padding: 0 5px 0 7px; }
.topic span { width: 99px; overflow: hidden; }
.tasks { height: 400px; padding: 12px 12px 4px; background: linear-gradient(90deg, #f1f0e4, #fff 12px, #fff 94%, #f1f0e4); }
.tasks h4 { display: flex; align-items: center; justify-content: space-between; height: 30px; padding: 3px 9px 0 3px; font-weight: 700; color: #2f5cab; background: linear-gradient(90deg, #fff, #f3f2e8); }
.tasks ul { list-style: none; display: grid; grid-auto-rows: 1fr; height: 354px; }
.tasks li { display: flex; }
.tasks a { display: flex; align-items: center; gap: 9px; padding-left: 14px; color: #111; text-decoration: none; white-space: nowrap; }
.tasks a svg { width: 18px; height: 21px; }
.more { height: 18px; justify-content: center; border: 1px solid #a9a697; background: var(--face); }
.filters { flex: 1; margin-top: 6px; border: 1px solid #8f8c7e; }
.fbody { flex: 1; border-top: 4px solid #f8f7f0; padding: 0 5px; background: #fff; }
.combo.slim { width: 102px; flex: 0 1 102px; margin: 0; overflow: hidden; }
.combo.slim::after { right: -2px; }
.combo.slim select { background-size: 10px 24px; background-position: right center; }
.fbody .sep { width: 18px; }
.fbody .tool { width: 32px; }
.fbody .pbar { height: 38px; }
.fbody table { width: 100%; border-collapse: collapse; table-layout: fixed; }
.fbody th { height: 32px; padding: 0 8px; text-align: left; font-weight: 400; background: #e9e6d8; border-right: 1px solid #bab7a7; border-bottom: 1px solid #c5c2b2; white-space: nowrap; }
.c0 { width: 30px; }
.c2 { width: 56px; }
.ptabs { display: flex; height: 33px; padding: 0 10px 3px 7px; color: #66645a; }
.ptabs button { gap: 2px; width: 68px; padding-left: 1px; }
.ptabs svg { width: 24px; height: 24px; }
.ptabs .mid { width: 73px; padding-left: 4px; }
.ptabs .on { width: 72px; padding-left: 4px; background: #fff; color: #111; border: 1px solid #c0bdad; border-top: 0; border-radius: 0 0 5px 5px; }

.toolbox { width: 64px; margin: 0 6px; display: flex; flex-direction: column; border: 1px solid #8f8c7e; border-top: 0; }
.toolbox .phead { padding: 0; height: 27px; }
.toolbox .phead button { width: 24px; }
.toolbox .phead .cut { width: 12px; overflow: hidden; justify-content: flex-end; }
.morebtn { height: 30px; padding-left: 3px; border: 1px solid #98957f; border-left: 0; background: linear-gradient(#c9c6b8, #dedbce); }
.tbody { flex: 1; display: flex; }
.tlist { width: 39px; overflow: hidden; background: #f2f0e6; }
.tlist h5 { display: flex; align-items: center; gap: 8px; height: 22px; padding-left: 9px; font-weight: 700; background: #cdcabd; }
.tlist h5 svg { width: 15px; height: 15px; }
.tgroup { display: flex; flex-direction: column; gap: 6px; padding: 11px 0 8px 7px; }
.tgroup svg { width: 24px; height: 24px; }
.yel svg { fill: #fbfa6c; stroke: #22220c; stroke-width: 1.5px; }
.vscroll { width: 28px; display: flex; flex-direction: column; align-items: center; background: #fbfbf7; }
.vscroll.box { width: 23px; }
.thumb { width: 24px; height: 417px; margin-top: 1px; border: 1px solid #98b0e6; border-radius: 3px; background: repeating-linear-gradient(#8ea8e6 0 1px, transparent 1px 4px) center / 10px 12px no-repeat, linear-gradient(90deg, #cfdcff, #bccdfb); }
.box .thumb { width: 22px; height: 660px; }
.sbtn { width: 24px; height: 23px; justify-content: center; border: 1px solid #b4c6f0; border-radius: 3px; background: #c5d4fb; }
.vscroll .bottom, .box .sbtn { margin-top: auto; }
.sbtn svg { width: 20px; height: 20px; }

.doc { flex: 1; min-width: 0; display: flex; flex-direction: column; border-left: 1px solid var(--line); }
.dhead { display: flex; align-items: center; height: 40px; padding: 0 10px 0 28px; background: linear-gradient(#e4e1d5, #cbc8b9 55%, #b3b09f); font: 16px/20px "Liberation Sans", sans-serif; gap: 12px; white-space: nowrap; }
.dhead .ic { margin-right: -4px; }
.dbtns { margin-left: auto; display: flex; gap: 22px; }
.dbtns svg { width: 16px; height: 16px; }
.dtools { height: 41px; padding-left: 4px; }
.spin { display: flex; width: 65px; height: 27px; margin-right: 4px; background: #f3f1e6; color: #99968a; }
.spin input { width: 46px; border: 0; padding: 0 8px; background: none; }
.spin > span { flex: 1; display: flex; flex-direction: column; justify-content: space-around; align-items: center; background: #fbfaf4; }
.after { margin-left: 4px; }
.over.end { margin-left: auto; }

.stage { flex: 1; display: flex; min-height: 0; }
.canvas { flex: 1; position: relative; overflow: hidden; background: linear-gradient(#a9b8db, #b6c1e4 20%, #c3cde9 38%, #d3d6ee 60%, #e3e6f5 90%, #e7eaf7); font: 16px/19px "Liberation Sans", sans-serif; }
.ctitle { position: absolute; left: 167px; top: 54px; font-weight: 700; font-size: 19px; white-space: nowrap; }
.links { position: absolute; left: 0; top: 0; }
.node { position: absolute; text-align: center; white-space: nowrap; color: #111; border: 2px solid #25281c; box-shadow: 4px 4px 3px rgba(80, 80, 90, .45); }
.fn { width: 154px; height: 103px; padding-top: 30px; border-radius: 15px; background: linear-gradient(100deg, #ffffee 30%, #fdfcdc 60%, #f3efb0); }
.fn svg { position: absolute; right: 4px; top: 2px; width: 22px; height: 26px; }
.tp { width: 135px; height: 105px; padding-top: 9px; background: linear-gradient(#14301a, #14301a) 0 28px / 100% 2px no-repeat, linear-gradient(100deg, #eaffea 35%, #d4fbd6 60%, #aeeab2); }

.dtabs { display: flex; height: 34px; background: var(--face); }
.nav { width: 24px; justify-content: center; }
.nav svg { width: 12px; height: 24px; }
.nav.right { margin: 0 10px 0 auto; }
.dtab { padding: 0 46px 0 42px; margin-left: 6px; gap: 44px; background: linear-gradient(#fffef6 45%, #d3d0c1 60%, #c2bfae); clip-path: polygon(0 0, calc(100% - 28px) 0, 100% 100%, 30px 100%); }
.dtab.on { padding: 0 10px 0 43px; margin-left: -32px; gap: 10px; font-weight: 700; background: #fff; clip-path: polygon(0 0, 100% 0, 100% 100%, 30px 100%); border-bottom: 1px solid #77746a; border-right: 1px solid #77746a; }

.dock { height: 34px; padding: 4px 0 0 39px; display: flex; border-bottom: 1px solid var(--line); }
.dock button { gap: 1px; padding: 0 4px; border: 1px solid #a9a697; border-bottom: 0; border-radius: 4px 4px 0 0; color: #66645a; }
.dock svg { width: 24px; height: 24px; }
.status { display: flex; align-items: center; height: 35px; padding: 0 2px; white-space: nowrap; }
.sel { margin-left: auto; display: flex; gap: 16px; color: #aaa799; }
.zoom { display: flex; align-items: center; margin: 0 6px 0 70px; }
.zoom svg { width: 24px; height: 24px; }
.zoom input { appearance: none; width: 134px; height: 28px; margin: 0 8px 0 2px; background: linear-gradient(#99968a, #99968a) center / 100% 1px no-repeat; }
.zoom input::-webkit-slider-thumb { appearance: none; width: 15px; height: 26px; border: 1px solid #6f8f70; border-radius: 3px 3px 7px 7px; background: linear-gradient(#36b04a 5px, #f6f6f0 5px); }
.locks { display: flex; justify-content: space-between; width: 183px; height: 21px; padding: 0 12px 0 9px; border: 1px solid #b9b6a6; color: #aaa799; line-height: 19px; }

.taskbar { display: flex; height: 44px; color: #fff; background: linear-gradient(#3f80f0, #2b62dc 12%, #245bdb 80%, #1c48b8); text-shadow: 1px 1px 1px rgba(0, 20, 90, .6); }
.start { width: 141px; padding-left: 14px; gap: 6px; font: italic 700 24px/30px "Noto Sans", sans-serif; background: linear-gradient(#5fb85c, #3a9a38 20%, #399838 75%, #2b7a2b); border-radius: 0 14px 14px 0; }
.start svg { width: 28px; height: 28px; }
.apps { flex: 1; display: grid; grid-template-columns: repeat(7, 1fr); gap: 2px; padding: 4px 0 4px 17px; }
.apps button { gap: 5px; padding-left: 13px; border-radius: 4px; background: linear-gradient(#5a97fa, #3a7bf2 18%, #3472ea 85%, #2a5fd4); min-width: 0; overflow: hidden; }
.apps svg { width: 24px; height: 24px; }
.apps .on { background: linear-gradient(#173f9f, #1c4cbb 20%, #1e52c4); padding-left: 16px; }
.lang { width: 68px; align-self: center; text-align: center; padding-right: 14px; }
.tray { flex: none; width: 135px; white-space: nowrap; display: flex; align-items: center; background: linear-gradient(#2fb4f5, #1290e4 15%, #149bee 80%, #0c74c8); }
.expand { flex: none; width: 26px; height: 26px; margin-left: -14px; border-radius: 50%; justify-content: center; background: radial-gradient(circle at 35% 35%, #6cc5f8, #1a6fd0); }
.expand svg { width: 18px; height: 18px; }
.net { width: 28px; height: 24px; margin: 0 6px 0 2px; }
```
